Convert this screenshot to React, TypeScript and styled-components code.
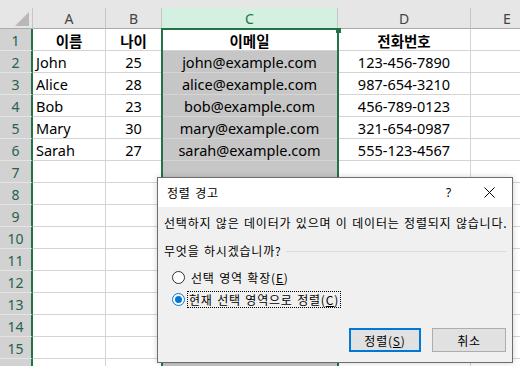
import React from "react";
import styled, { createGlobalStyle, css } from "styled-components";

const Global = createGlobalStyle`
  html, body { margin: 0; padding: 0; width: 520px; height: 366px; overflow: hidden; background: #fff; }
  * { box-sizing: border-box; }
`;

const GREEN = "#217346";

const Screen = styled.div`
  position: relative;
  width: 520px;
  height: 366px;
  overflow: hidden;
  background: #e6e6e6;
  font-family: "Noto Sans", "Noto Sans CJK KR", sans-serif;
`;

const TopStrip = styled.div`
  height: 8px;
  background: #e6e6e6;
`;

const Grid = styled.div`
  display: grid;
  grid-template-columns: 33px 73px 56px 176px 133px 73px;
  grid-template-rows: 21px;
  grid-auto-rows: 22px;
  width: 544px;
  background: #fff;
`;

const Corner = styled.div`
  display: flex;
  align-items: flex-end;
  justify-content: flex-end;
  padding: 0 3px 2px 0;
  background: #e6e6e6;
  border-right: 1px solid #c6c6c6;
  border-bottom: 1px solid #ababab;
`;

const ColHead = styled.div<{ $sel?: boolean }>`
  display: flex;
  align-items: center;
  justify-content: center;
  font-size: 14px;
  color: #444;
  background: #e6e6e6;
  border-right: 1px solid #c6c6c6;
  border-bottom: 1px solid #ababab;
  padding-top: 1px;
  ${(p) =>
    p.$sel &&
    css`
      background: #d3f0e0;
      color: ${GREEN};
    `}
`;

const RowHead = styled.div`
  display: flex;
  align-items: center;
  justify-content: center;
  font-size: 14px;
  color: #24634b;
  background: #d2d2d2;
  border-bottom: 1px solid #e4e4e4;
  border-right: 2px solid ${GREEN};
  padding-top: 1px;
`;

const Cell = styled.div<{ $align?: "left" | "center"; $sel?: boolean; $bold?: boolean }>`
  display: flex;
  align-items: center;
  justify-content: ${(p) => (p.$align === "center" ? "center" : "flex-start")};
  padding: 1px 3px 0 3px;
  font-size: 14.5px;
  color: #000;
  white-space: nowrap;
  overflow: hidden;
  background: ${(p) => (p.$sel ? "#c6c6c6" : "#fff")};
  border-right: 1px solid #d4d4d4;
  border-bottom: 1px solid #d4d4d4;
  font-weight: ${(p) => (p.$bold ? 700 : 400)};
  ${(p) =>
    p.$bold &&
    css`
      font-family: "Noto Sans CJK KR", sans-serif;
      font-size: 14.5px;
    `}
`;

const SelectionFrame = styled.div`
  position: absolute;
  left: 161px;
  top: 28px;
  width: 178px;
  bottom: 0;
  border: 2px solid ${GREEN};
  border-bottom: none;
  pointer-events: none;
`;

const Handle = styled.div`
  position: absolute;
  left: 336px;
  top: 28px;
  width: 5px;
  height: 5px;
  background: ${GREEN};
`;

/* Dialog */
const Dialog = styled.div`
  position: absolute;
  left: 157px;
  top: 177px;
  width: 356px;
  height: 186px;
  display: flex;
  flex-direction: column;
  background: #f0f0f0;
  border: 1px solid #6e6e6e;
  box-shadow: 0 0 6px rgba(0, 0, 0, 0.18);
  font-family: "Noto Sans CJK KR", sans-serif;
  font-size: 12px;
  color: #000;
  letter-spacing: 0.8px;
  word-spacing: 1px;
`;

const TitleBar = styled.div`
  height: 29px;
  display: flex;
  align-items: center;
  background: #fff;
  padding-left: 9px;
`;

const Title = styled.div`
  flex: 1;
`;

const TitleButton = styled.div<{ $w: number }>`
  width: ${(p) => p.$w}px;
  height: 29px;
  display: flex;
  align-items: center;
  justify-content: center;
  font-family: "Noto Sans", sans-serif;
  font-size: 12px;
`;

const Body = styled.div`
  flex: 1;
  display: flex;
  flex-direction: column;
  padding: 8px 6px 10px 6px;
`;

const Message = styled.div`
  line-height: 16px;
  height: 16px;
  white-space: nowrap;
`;

const QuestionRow = styled.div`
  display: flex;
  align-items: center;
  margin-top: 12px;
  height: 16px;
  line-height: 16px;
`;

const Rule = styled.div`
  flex: 1;
  height: 1px;
  margin-left: 4px;
  background: #dadada;
`;

const Options = styled.div`
  display: flex;
  flex-direction: column;
  gap: 4px;
  margin-top: 9px;
  padding-left: 8px;
`;

const Option = styled.div`
  display: flex;
  align-items: center;
  height: 18px;
`;

const RadioDot = styled.span<{ $on?: boolean }>`
  width: 13px;
  height: 13px;
  border-radius: 50%;
  border: 1px solid ${(p) => (p.$on ? "#0078d7" : "#333")};
  background: #fff;
  display: flex;
  align-items: center;
  justify-content: center;
  flex: none;
  &::after {
    content: "";
    width: 7px;
    height: 7px;
    border-radius: 50%;
    background: ${(p) => (p.$on ? "#0078d7" : "transparent")};
  }
`;

const OptionLabel = styled.span<{ $focus?: boolean }>`
  margin-left: ${(p) => (p.$focus ? "2px" : "4px")};
  line-height: 15px;
  padding: 0 1px;
  border: 1px dotted ${(p) => (p.$focus ? "#000" : "transparent")};
  white-space: nowrap;
`;

const Buttons = styled.div`
  margin-top: auto;
  display: flex;
  justify-content: flex-end;
  gap: 11px;
`;

const Btn = styled.div<{ $primary?: boolean; $w: number }>`
  width: ${(p) => p.$w}px;
  height: 24px;
  display: flex;
  align-items: center;
  justify-content: center;
  background: #e1e1e1;
  border: ${(p) => (p.$primary ? "2px solid #0078d7" : "1px solid #adadad")};
`;

const cols = ["A", "B", "C", "D", "E"];

type Row = [string, string, string, string];
const data: Row[] = [
  ["John", "25", "john@example.com", "123-456-7890"],
  ["Alice", "28", "alice@example.com", "987-654-3210"],
  ["Bob", "23", "bob@example.com", "456-789-0123"],
  ["Mary", "30", "mary@example.com", "321-654-0987"],
  ["Sarah", "27", "sarah@example.com", "555-123-4567"],
];

export default function App() {
  const rows: React.ReactNode[] = [];
  for (let r = 1; r <= 16; r++) {
    const d = r >= 2 && r <= 6 ? data[r - 2] : null;
    rows.push(
      <React.Fragment key={r}>
        <RowHead>{r <= 15 ? r : ""}</RowHead>
        {r === 1 ? (
          <>
            <Cell $align="center" $bold>이름</Cell>
            <Cell $align="center" $bold>나이</Cell>
            <Cell $align="center" $bold>이메일</Cell>
            <Cell $align="center" $bold>전화번호</Cell>
            <Cell />
          </>
        ) : (
          <>
            <Cell>{d ? d[0] : ""}</Cell>
            <Cell $align="center">{d ? d[1] : ""}</Cell>
            <Cell $align="center" $sel>{d ? d[2] : ""}</Cell>
            <Cell $align="center">{d ? d[3] : ""}</Cell>
            <Cell />
          </>
        )}
      </React.Fragment>
    );
  }

  return (
    <Screen>
      <Global />
      <TopStrip />
      <Grid>
        <Corner>
          <svg width="14" height="14" viewBox="0 0 14 14">
            <polygon points="14,0 14,14 0,14" fill="#b8b8b8" />
          </svg>
        </Corner>
        {cols.map((c) => (
          <ColHead key={c} $sel={c === "C"}>
            {c}
          </ColHead>
        ))}
        {rows}
      </Grid>
      <SelectionFrame />
      <Handle />

      <Dialog>
        <TitleBar>
          <Title>정렬 경고</Title>
          <TitleButton $w={34}>?</TitleButton>
          <TitleButton $w={46}>
            <svg width="11" height="11" viewBox="0 0 11 11">
              <path d="M0.5 0.5 L10.5 10.5 M10.5 0.5 L0.5 10.5" stroke="#000" strokeWidth="1" />
            </svg>
          </TitleButton>
        </TitleBar>
        <Body>
          <Message>선택하지 않은 데이터가 있으며 이 데이터는 정렬되지 않습니다.</Message>
          <QuestionRow>
            무엇을 하시겠습니까?
            <Rule />
          </QuestionRow>
          <Options>
            <Option>
              <RadioDot />
              <OptionLabel>
                선택 영역 확장(<u>E</u>)
              </OptionLabel>
            </Option>
            <Option>
              <RadioDot $on />
              <OptionLabel $focus>
                현재 선택 영역으로 정렬(<u>C</u>)
              </OptionLabel>
            </Option>
          </Options>
          <Buttons>
            <Btn $primary $w={72}>
              정렬(<u>S</u>)
            </Btn>
            <Btn $w={74}>취소</Btn>
          </Buttons>
        </Body>
      </Dialog>
    </Screen>
  );
}
